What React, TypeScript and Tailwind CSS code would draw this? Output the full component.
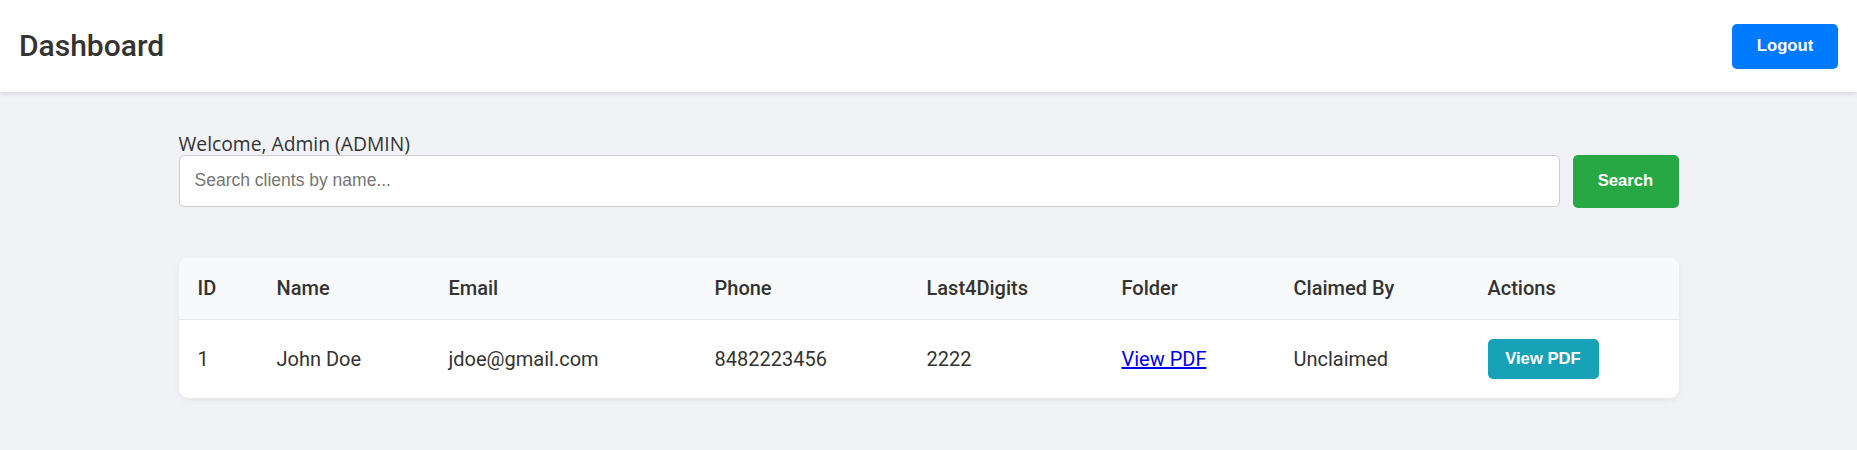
import React from "react";

const cols = [79, 172, 266, 212, 195, 172, 194, 210];
const headers = ["ID", "Name", "Email", "Phone", "Last4Digits", "Folder", "Claimed By", "Actions"];

export default function App() {
  return (
    <div className="min-h-[450px] bg-[#f0f2f5] font-['Roboto',sans-serif] text-[#333]">
      <header className="flex h-[92px] items-center justify-between bg-white px-[19px] shadow-[0_2px_5px_rgba(0,0,0,0.1)]">
        <h1 className="text-[30px] font-medium leading-none text-[#333]">Dashboard</h1>
        <button className="h-[45px] w-[106px] rounded-[5px] bg-[#007bff] pb-[2px] font-['Liberation_Sans',Arial,sans-serif] text-[16.67px] font-bold text-white">
          Logout
        </button>
      </header>
      <main className="mx-auto w-[1500px] pt-[40px] pb-[52px]">
        <div className="h-[23px] font-['Open_Sans',sans-serif] text-[19.3px] leading-[23px] text-[#333]">
          Welcome, Admin (ADMIN)
        </div>
        <div className="flex items-stretch gap-[13px]">
          <input
            type="text"
            placeholder="Search clients by name..."
            className="h-[52px] flex-1 rounded-[5px] border border-[#ccc] bg-white px-[15px] pb-[1px] font-['Liberation_Sans',Arial,sans-serif] text-[17.5px] text-[#333] placeholder:text-[#757575] outline-none"
          />
          <button className="h-[53px] w-[106px] rounded-[5px] bg-[#28a745] pb-[2px] font-['Liberation_Sans',Arial,sans-serif] text-[16.67px] font-bold text-white">
            Search
          </button>
        </div>
        <div className="mt-[50px] overflow-hidden rounded-[9px] bg-white shadow-[0_2px_6px_rgba(0,0,0,0.06)]">
          <table className="w-full table-fixed border-collapse text-left">
            <colgroup>
              {cols.map((w, i) => (
                <col key={i} style={{ width: w }} />
              ))}
            </colgroup>
            <thead>
              <tr className="h-[61px] border-b border-[#e5e7eb] bg-[#f8f9fa]">
                {headers.map((h) => (
                  <th key={h} className="pl-[19px] text-[20px] font-medium text-[#333]">
                    {h}
                  </th>
                ))}
              </tr>
            </thead>
            <tbody>
              <tr className="h-[79px] text-[20px]">
                <td className="pl-[19px]">1</td>
                <td className="pl-[19px]">John Doe</td>
                <td className="pl-[19px]">jdoe@gmail.com</td>
                <td className="pl-[19px]">8482223456</td>
                <td className="pl-[19px]">2222</td>
                <td className="pl-[19px]">
                  <a href="#" className="text-[#0000ee] underline">
                    View PDF
                  </a>
                </td>
                <td className="pl-[19px]">Unclaimed</td>
                <td className="pl-[19px]">
                  <button className="h-[40px] w-[111px] rounded-[5px] bg-[#17a2b8] font-['Liberation_Sans',Arial,sans-serif] text-[16.67px] font-bold text-white">
                    View PDF
                  </button>
                </td>
              </tr>
            </tbody>
          </table>
        </div>
      </main>
    </div>
  );
}
